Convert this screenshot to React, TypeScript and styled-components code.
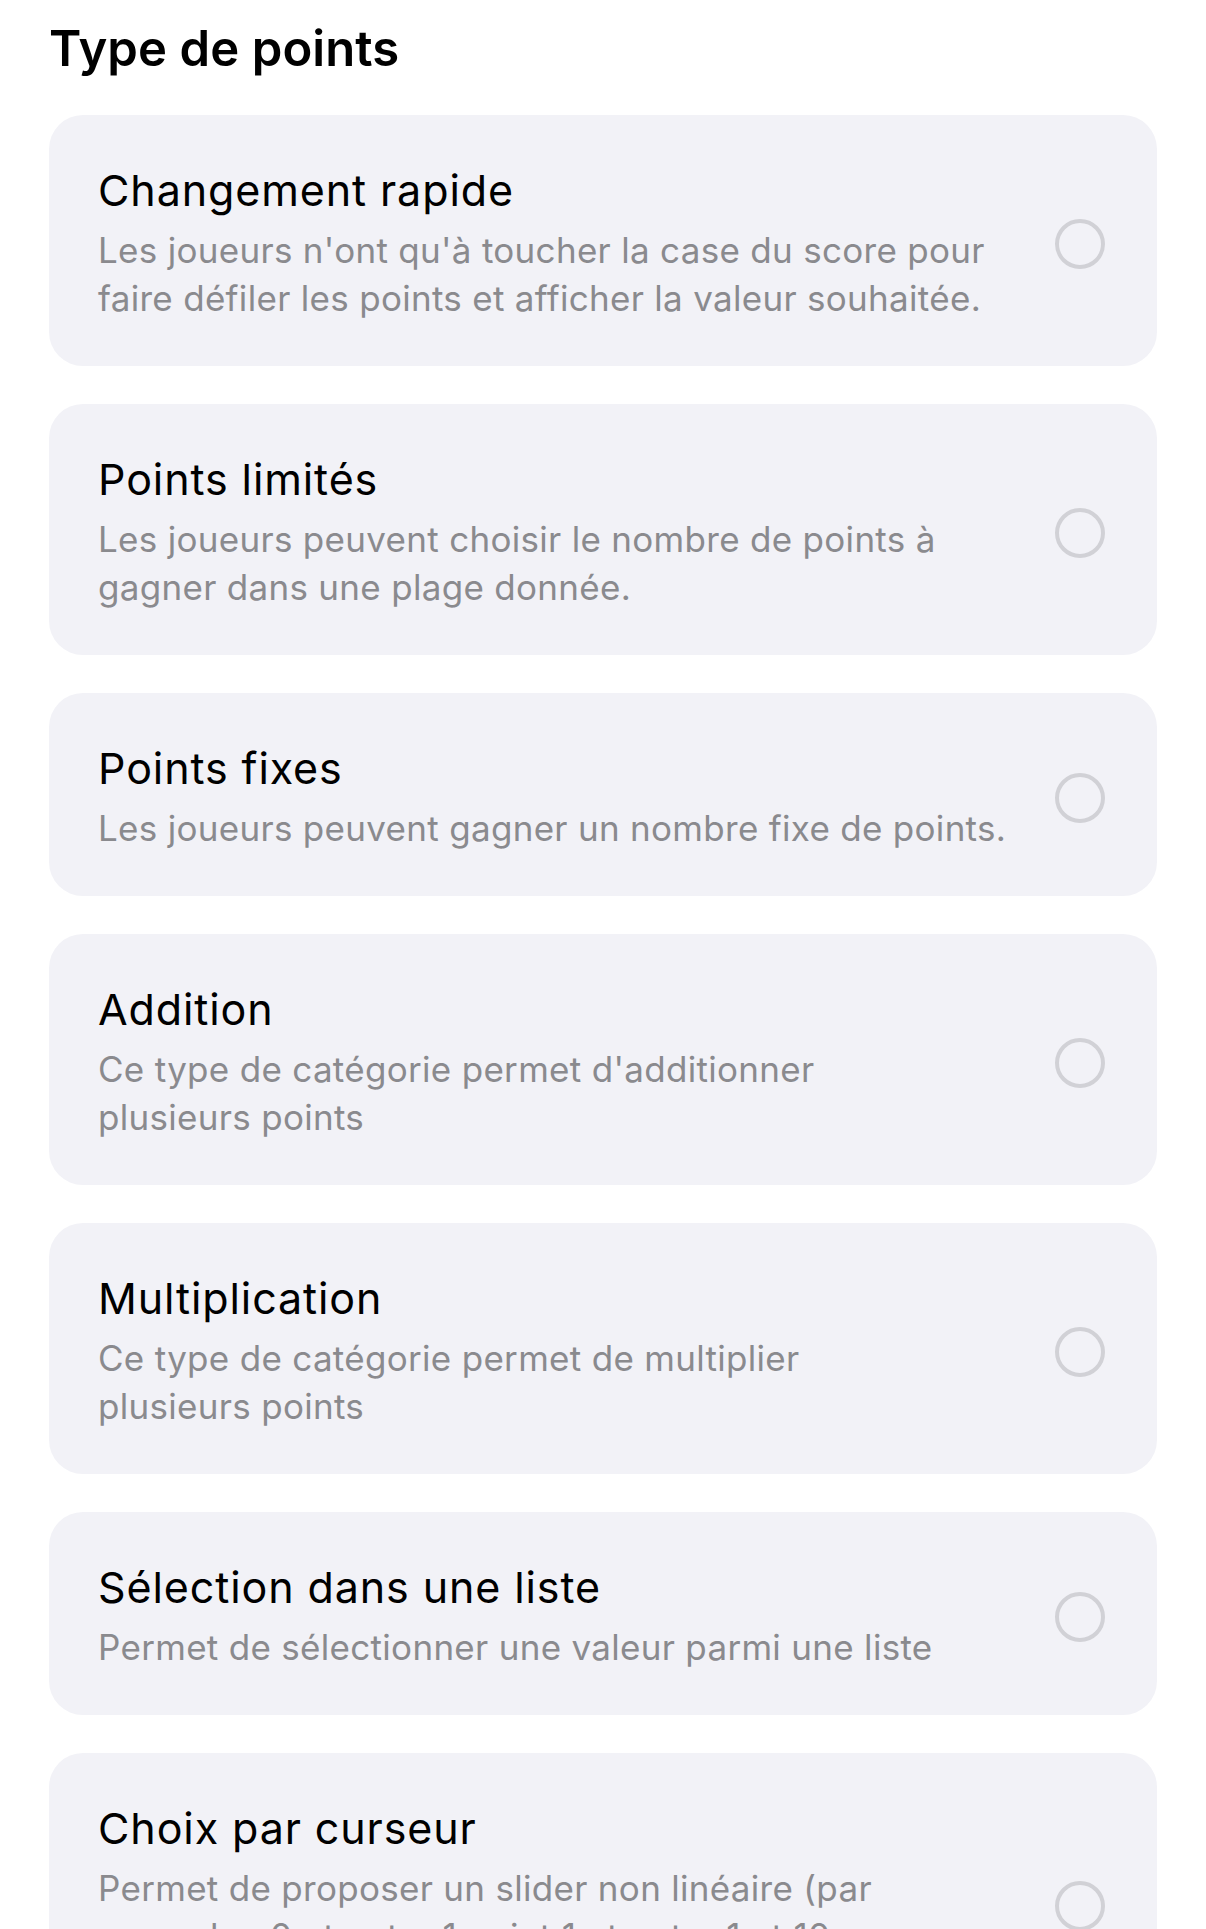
import React, { FC } from 'react';
import styled, { createGlobalStyle } from 'styled-components';

const GlobalStyle = createGlobalStyle`
    html, body {
        margin: 0;
        padding: 0;
        background: #ffffff;
    }
    body {
        font-family: Inter, 'Noto Sans', 'Liberation Sans', sans-serif;
        -webkit-font-smoothing: antialiased;
    }
`;

const Page = styled.div`
    display: flex;
    flex-direction: column;
    padding: 20px 49px 0;
`;

const Heading = styled.h1`
    margin: 0 0 37px;
    font-size: 49px;
    line-height: 58px;
    font-weight: 600;
    letter-spacing: 0.1px;
    color: #000000;
`;

const List = styled.div`
    display: flex;
    flex-direction: column;
    gap: 38px;
`;

const Card = styled.div`
    display: flex;
    align-items: center;
    background: #f2f2f7;
    border-radius: 34px;
    padding: 50px 52px 44px 49px;
`;

const Texts = styled.div`
    flex: 1;
    min-width: 0;
    display: flex;
    flex-direction: column;
`;

const CardTitle = styled.div`
    font-size: 43px;
    line-height: 50px;
    font-weight: 400;
    letter-spacing: 0.9px;
    color: #000000;
`;

const Description = styled.div`
    margin-top: 11px;
    font-size: 35px;
    line-height: 48px;
    font-weight: 400;
    letter-spacing: 0.3px;
    color: #8a8a8e;
    white-space: pre-line;
`;

const Radio = styled.span<{ $checked?: boolean }>`
    flex: none;
    width: 50px;
    height: 50px;
    box-sizing: border-box;
    border-radius: 50%;
    border: 4px solid ${(p) => (p.$checked ? '#007aff' : '#d1d1d6')};
    margin-left: 24px;
`;

interface IPointType {
    title: string;
    description: string;
}

const types: IPointType[] = [
    {
        title: 'Changement rapide',
        description:
            "Les joueurs n'ont qu'à toucher la case du score pour\nfaire défiler les points et afficher la valeur souhaitée.",
    },
    {
        title: 'Points limités',
        description: 'Les joueurs peuvent choisir le nombre de points à\ngagner dans une plage donnée.',
    },
    {
        title: 'Points fixes',
        description: 'Les joueurs peuvent gagner un nombre fixe de points.',
    },
    {
        title: 'Addition',
        description: "Ce type de catégorie permet d'additionner\nplusieurs points",
    },
    {
        title: 'Multiplication',
        description: 'Ce type de catégorie permet de multiplier\nplusieurs points',
    },
    {
        title: 'Sélection dans une liste',
        description: 'Permet de sélectionner une valeur parmi une liste',
    },
    {
        title: 'Choix par curseur',
        description:
            'Permet de proposer un slider non linéaire (par\nexemple : 0 et entre 1 point 1 et entre 1 et 10\npoints, puis de 10 en 10 points)',
    },
];

const PointTypeCard: FC<IPointType> = ({ title, description }) => (
    <Card>
        <Texts>
            <CardTitle>{title}</CardTitle>
            <Description>{description}</Description>
        </Texts>
        <Radio />
    </Card>
);

const App: FC = () => {
    return (
        <>
            <GlobalStyle />
            <Page>
                <Heading>Type de points</Heading>
                <List>
                    {types.map((t) => (
                        <PointTypeCard key={t.title} title={t.title} description={t.description} />
                    ))}
                </List>
            </Page>
        </>
    );
};

export default App;
